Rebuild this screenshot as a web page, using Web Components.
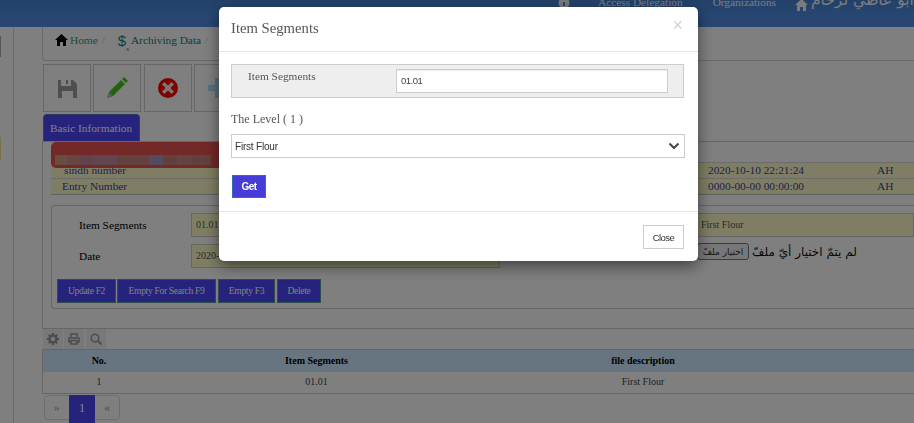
<!DOCTYPE html>
<html lang="en">
<head>
<meta charset="utf-8">
<title>Item Segments</title>
<style>
html, body { margin:0; height:100%; overflow:hidden; background:#fff; }
body { font:11.330px "Liberation Serif", "DejaVu Sans", serif; }
</style>
</head>
<body>
<app-page>
    <top-bar slot="top"></top-bar>
    <side-rail slot="side"></side-rail>
    <bread-crumb></bread-crumb>
    <tool-bar></tool-bar>
    <tab-title>Basic Information</tab-title>
    <main-panel>
        <info-table></info-table>
        <form-box></form-box>
    </main-panel>
    <grid-tools></grid-tools>
    <data-grid></data-grid>
    <page-nav></page-nav>
</app-page>
<modal-box heading="Item Segments"></modal-box>

<script>
class Base extends HTMLElement {
    constructor(html) {
        super()
        const shadow = this.attachShadow({ mode: 'open' })
        const template = document.createElement('template')
        template.innerHTML = html
        shadow.append(template.content.cloneNode(true))
    }
}

customElements.define('app-page', class extends Base {
    constructor() {
        super(`
        <style>
        :host { display:flex; flex-direction:column; width:914px; height:423px; overflow:hidden; }
        section { display:flex; flex:1; min-height:0; }
        main { flex:1; min-width:0; display:flex; flex-direction:column; overflow:hidden; }
        </style>
        <slot name="top"></slot>
        <section>
            <slot name="side"></slot>
            <main><slot></slot></main>
        </section>
        `)
    }
})

customElements.define('top-bar', class extends Base {
    constructor() {
        super(`
        <style>
        :host { display:flex; align-items:flex-end; height:27px; flex:none; overflow:hidden; white-space:nowrap;
            background:linear-gradient(#4782d2, #4e8ee4 60%); color:#f4f7ff; padding:0 0 18px 546px; box-sizing:border-box; line-height:14px; font-size:11.330px; }
        span { flex:none; }
        .caret { width:0; height:0; border:3px solid transparent; border-top-color:#f4f7ff; border-bottom:0; margin-bottom:11px; }
        svg { flex:none; display:block; }
        .ar { font:15.500px "DejaVu Sans", sans-serif; }
        </style>
        <i class="caret"></i>
        <svg style="margin-left:6px" width="12" height="12" viewBox="0 0 12 12"><circle cx="6" cy="6" r="5.5" fill="#f4f7ff"/><rect x="5" y="5" width="2" height="4" fill="#4e8ee4"/></svg>
        <i class="caret" style="margin-left:20px"></i>
        <span style="margin-left:2px">Access Delegation</span>
        <i class="caret" style="margin-left:22px"></i>
        <span style="margin-left:2px">Organizations</span>
        <svg style="margin-left:19px;margin-bottom:-2px" width="13" height="12" viewBox="0 0 13 12"><path d="M6.5 0 13 6h-2v6H8V8H5v4H2V6H0z" fill="#f4f7ff"/></svg>
        <span class="ar" dir="rtl" style="margin-left:3px">باسل ابو عاطي لرخام</span>
        `)
    }
})

customElements.define('side-rail', class extends Base {
    constructor() {
        super(`
        <style>
        :host { display:block; width:42px; flex:none; box-sizing:border-box; position:relative; }
        .line { width:13px; height:100%; border-right:1px solid #d9d9d9; }
        b { position:absolute; left:0; width:1px; }
        </style>
        <div class="line"></div>
        <b style="top:9px;height:21px;background:#aaa"></b>
        <b style="top:110px;height:23px;background:#f5e58c"></b>
        `)
    }
})

customElements.define('bread-crumb', class extends Base {
    constructor() {
        super(`
        <style>
        :host { display:flex; align-items:center; height:34px; flex:none; box-sizing:border-box; padding:0 0 7px 12px;
            border-left:1px solid #d4d4d4; border-bottom:1px solid #d4d4d4; border-bottom-left-radius:4px; color:#2f9c6f; white-space:nowrap; }
        s { text-decoration:none; color:#ccc; margin-left:4px; }
        b { font:15px "Liberation Sans", sans-serif; color:#14807e; margin-left:13px; }
        small { font-size:7px; color:#14807e; align-self:flex-end; margin:0 2px 0 0; }
        </style>
        <svg width="13" height="12" viewBox="0 0 13 12" style="margin-right:2px"><path d="M6.5 0 13 6h-2v6H8V8H5v4H2V6H0z" fill="#000"/></svg>
        <span>Home</span><s>/</s>
        <b>$</b><small>s</small><span style="color:#14807e">Archiving Data</span><s>/</s>
        `)
    }
})

customElements.define('tool-bar', class extends Base {
    constructor() {
        super(`
        <style>
        :host { display:flex; gap:2px; flex:none; margin:3px 0 2px 1px; height:48px; }
        div { width:48px; height:48px; box-sizing:border-box; border:1px solid #ccc; display:flex; align-items:center; justify-content:center; }
        </style>
        <div><svg width="19" height="19" viewBox="0 0 19 19"><path d="M0 1h15l4 4v14H0zM3 1v6h10V1h-3v4H8V1zM4 12v7h11v-7z" fill="#9c9c9c" fill-rule="evenodd"/></svg></div>
        <div><svg width="22" height="22" viewBox="0 0 22 22"><path d="M1 21l2-6L15 3l4 4L7 19z" fill="#46c420"/><path d="M1 21l2-6 4 4z" fill="#9ec0c8"/><path d="M16 2l2-2 4 4-2 2z" fill="#46c420"/></svg></div>
        <div style="margin-left:1px"><svg width="20" height="20" viewBox="0 0 20 20"><circle cx="10" cy="10" r="10" fill="#ff0000"/><path d="M6.4 4 10 7.600 13.600 4 16 6.400 12.400 10 16 13.600 13.600 16 10 12.400 6.400 16 4 13.600 7.600 10 4 6.400z" fill="#f4e8e8"/></svg></div>
        <div><svg width="20" height="20" viewBox="0 0 20 20"><path d="M7 0h6v7h7v6h-7v7H7v-7H0V7h7z" fill="#aee0ff"/></svg></div>
        `)
    }
})

customElements.define('tab-title', class extends Base {
    constructor() {
        super(`
        <style>
        :host { display:flex; align-items:center; flex:none; width:97px; height:27px; box-sizing:border-box; margin-left:1px; padding-left:6px;
            background:#4c46fa; color:#fff; border-radius:4px 4px 0 0; border:1px solid #5a7ac8; border-bottom:0; white-space:nowrap; }
        </style>
        <slot></slot>
        `)
    }
})

customElements.define('main-panel', class extends Base {
    constructor() {
        super(`
        <style>
        :host { display:block; flex:none; position:relative; height:188px; box-sizing:border-box; padding:20px 0 0 8px;
            border:1px solid #ccc; border-width:1px 0 1px 1px; }
        .alert { position:absolute; left:8px; top:0; width:260px; height:26px; background:#e85252; border-radius:5px; }
        .alert i { position:absolute; left:4px; top:13px; width:156px; height:10px;
            background:linear-gradient(90deg, #d09a86 0 8%, #d08a84 8% 16%, #c78692 16% 24%, #c48aa0 24% 40%, #c8827e 40% 60%, #aa96be 60% 69%, #c87e80 69% 78%, #cc8884 78% 88%, #c4807e 88% 100%); }
        </style>
        <slot></slot>
        <div class="alert"><i></i></div>
        `)
    }
})

customElements.define('info-table', class extends Base {
    constructor() {
        super(`
        <style>
        :host { display:block; color:#3e3ea8; }
        div { display:grid; grid-template-columns:646px 169px 1fr; height:16px; line-height:15px; box-sizing:border-box; padding-left:11px;
            background:#fefdc8; border-top:1px solid #d6d6d6; white-space:nowrap; }
        div:last-child { border-bottom:1px solid #c0c0c0; height:17px; }
        </style>
        <div><span style="padding-left:2px">sindh number</span><span>2020-10-10 22:21:24</span><span>AH</span></div>
        <div><span>Entry Number</span><span>0000-00-00 00:00:00</span><span>AH</span></div>
        `)
    }
})

customElements.define('form-box', class extends Base {
    constructor() {
        super(`
        <style>
        :host { display:block; margin-top:10px; height:104px; box-sizing:border-box; border:1px solid #ccc; border-right:0;
            border-radius:4px 0 0 4px; padding:7px 0 0 5px; color:#000; }
        .grid { display:grid; grid-template-columns:112px 309px 1fr; grid-auto-rows:24px; row-gap:7px; padding-left:22px; }
        label { align-self:center; }
        .field { background:#fefdc8; border:1px solid #ccc; box-sizing:border-box; color:#555; font-size:10px; line-height:21px; padding-left:4px; white-space:nowrap; overflow:hidden; }
        .far { margin-left:190px; padding-left:10px; }
        .file { display:flex; align-items:flex-start; margin-left:197px; font:12px "DejaVu Sans", sans-serif; white-space:nowrap; }
        .file button { flex:none; width:52px; height:17px; padding:0; margin:-1px 3px 0 0; border:1px solid #777; border-radius:3px; background:#eee; font:9px "DejaVu Sans", sans-serif; color:#333; }
        .file span { line-height:16px; color:#111; }
        .btns { display:flex; gap:2px; margin-top:11px; }
        .btns button { height:24px; padding:0; background:#4c46fa; color:#fff; border:1px solid #5a9a9a; font:9.500px "Liberation Serif", serif; letter-spacing:-.3px; box-sizing:border-box; }
        </style>
        <div class="grid">
            <label>Item Segments</label><div class="field">01.01</div><div class="field far">First Flour</div>
            <label>Date</label><div class="field">2020-10-10</div>
            <div class="file"><button>اختيار ملفّ</button><span dir="rtl">لم يتمّ اختيار أيّ ملفّ</span></div>
        </div>
        <div class="btns">
            <button style="width:59px;margin-right:-1px">Update F2</button>
            <button style="width:99px">Empty For Search F9</button>
            <button style="width:57px">Empty F3</button>
            <button style="width:44px">Delete</button>
        </div>
        `)
    }
})

customElements.define('grid-tools', class extends Base {
    constructor() {
        super(`
        <style>
        :host { display:flex; gap:1px; flex:none; height:20px; margin:0 0 0 1px; }
        div { width:20px; height:20px; background:#f0f0f0; display:flex; align-items:center; justify-content:center; }
        div:first-child { background:#d2d2d2; }
        svg { display:block; }
        </style>
        <div><svg width="12" height="12" viewBox="0 0 12 12"><circle cx="6" cy="6" r="3.500" fill="none" stroke="#999" stroke-width="2.500"/><path d="M6 0v2.500M6 9.500V12M0 6h2.500M9.500 6H12M1.800 1.800l1.800 1.800M8.400 8.400l1.800 1.800M1.800 10.200l1.800-1.800M8.400 3.600l1.800-1.800" stroke="#999" stroke-width="2"/></svg></div>
        <div><svg width="12" height="12" viewBox="0 0 12 12"><path d="M3 4V1h6v3M3 9H1V5h10v4H9M3 7.500h6V11H3z" fill="none" stroke="#999" stroke-width="1.500"/></svg></div>
        <div style="margin-left:1px"><svg width="12" height="12" viewBox="0 0 12 12"><circle cx="5" cy="5" r="3.800" fill="none" stroke="#999" stroke-width="1.500"/><path d="M8 8l3.500 3.500" stroke="#999" stroke-width="2"/></svg></div>
        `)
    }
})

customElements.define('data-grid', class extends Base {
    constructor() {
        super(`
        <style>
        :host { display:block; flex:none; border:1px solid #ccc; border-width:1px 0 1px 1px; width:1100px; color:#444; font-size:10px; }
        div { display:grid; grid-template-columns:112px 323px 330px 300px; text-align:center; white-space:nowrap; }
        .head { height:22px; line-height:21px; background:#cdeaff; color:#000; font-weight:bold; }
        .row { height:21px; line-height:20px; }
        </style>
        <div class="head"><span>No.</span><span>Item Segments</span><span>file description</span><span>Date</span></div>
        <div class="row"><span>1</span><span>01.01</span><span>First Flour</span><span>2020-10-10</span></div>
        `)
    }
})

customElements.define('page-nav', class extends Base {
    constructor() {
        super(`
        <style>
        :host { display:flex; flex:none; width:76px; height:25px; margin:1px 0 0 2px; box-sizing:border-box; border:1px solid #ddd; border-radius:4px; color:#a0a0a0; font-size:12px; }
        span { display:flex; align-items:center; justify-content:center; }
        .a { width:24px; }
        .on { width:27px; height:28px; margin-top:-1px; background:#4c46fa; color:#fff; font-size:13px; padding-bottom:3px; box-sizing:border-box; }
        </style>
        <span class="a">»</span><span class="on">1</span><span class="a" style="color:#d08a60">«</span>
        `)
    }
})

customElements.define('modal-box', class extends Base {
    constructor() {
        super(`
        <style>
        :host { position:fixed; inset:0; background:rgba(0,0,0,.5); display:block; }
        .dialog { width:479px; height:254px; margin:7px 0 0 219px; background:#fff; border-radius:5px; box-shadow:0 5px 15px rgba(0,0,0,.5);
            display:flex; flex-direction:column; color:#555; box-sizing:border-box; }
        header { display:flex; align-items:center; justify-content:space-between; height:45px; flex:none; box-sizing:border-box; padding:0 15px 2px 12px; border-bottom:1px solid #e5e5e5; }
        h4 { margin:0; font:normal 14.700px "Liberation Serif", serif; }
        .x { font:18px "Liberation Sans", sans-serif; color:#d0d0d0; line-height:1; margin-top:-6px; }
        .body { flex:1; padding:12px 13px 0 12px; }
        .box { display:grid; grid-template-columns:148px 272px; height:34px; width:453px; padding:4px 0 0 16px; box-sizing:border-box; background:#eee; border:1px solid #ccc; }
        .box label { padding-top:1px; }
        .input { height:24px; box-sizing:border-box; background:#fff; border:1px solid #ccc; box-shadow:inset 0 1px 1px rgba(0,0,0,.08); font:9.500px "Liberation Sans", sans-serif; letter-spacing:-.5px; line-height:22px; padding-left:4px; color:#444; }
        .lvl { margin-top:14px; line-height:14px; font-size:12px; }
        .select { display:flex; align-items:center; justify-content:space-between; width:454px; height:24px; box-sizing:border-box; margin-top:8px; padding:0 4px 0 3px; background:#fff; border:1px solid #ccc; font:10px "Liberation Sans", sans-serif; letter-spacing:-.2px; color:#333; }
        .get { display:block; width:34px; height:23px; margin:17px 0 0 1px; padding:0; background:#463cd7; color:#fff; border:1px solid #3a6ab0; font:bold 10px "Liberation Sans", sans-serif; letter-spacing:-.5px; }
        footer { height:50px; flex:none; box-sizing:border-box; border-top:1px solid #e5e5e5; display:flex; justify-content:flex-end; padding:13px 14px 0 0; }
        .close { width:41px; height:24px; padding:0; background:#fff; border:1px solid #ccc; font:9.500px "Liberation Sans", sans-serif; letter-spacing:-.6px; color:#333; }
        </style>
        <div class="dialog">
            <header><h4 id="t"></h4><span class="x">×</span></header>
            <div class="body">
                <div class="box"><label>Item Segments</label><div class="input">01.01</div></div>
                <div class="lvl">The Level ( 1 )</div>
                <div class="select"><span>First Flour</span>
                    <svg width="12" height="8" viewBox="0 0 12 8"><path d="M1.500 1.500 6 6l4.500-4.500" fill="none" stroke="#444" stroke-width="2"/></svg></div>
                <button class="get">Get</button>
            </div>
            <footer><button class="close">Close</button></footer>
        </div>
        `)
        this.shadowRoot.getElementById('t').textContent = this.getAttribute('heading')
    }
})
</script>
</body>
</html>
